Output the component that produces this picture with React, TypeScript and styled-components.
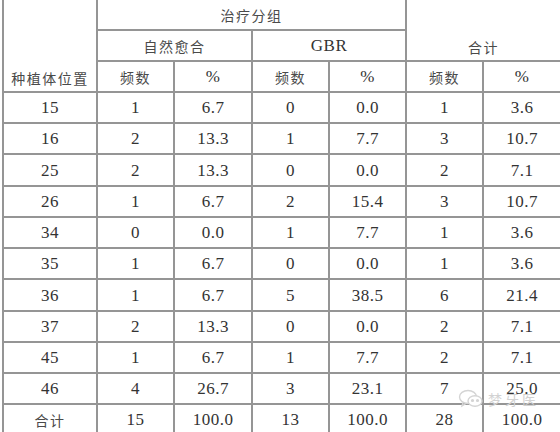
import React from 'react';
import styled, { createGlobalStyle } from 'styled-components';

const GlobalStyle = createGlobalStyle`
  html, body {
    margin: 0;
    padding: 0;
    background: #ffffff;
    overflow: hidden;
  }
  body {
    width: 560px;
    height: 432px;
  }
`;

const Page = styled.div`
  position: relative;
  width: 560px;
  height: 432px;
  overflow: hidden;
  padding-left: 2px;
  box-sizing: border-box;
`;

const Table = styled.table`
  border-collapse: collapse;
  table-layout: fixed;
  width: 557px;
  font-family: 'Liberation Serif', 'Noto Sans CJK SC', serif;
  color: #333333;
`;

const Col = styled.col<{ $w: number }>`
  width: ${(p) => p.$w}px;
`;

const Row = styled.tr<{ $h: number }>`
  height: ${(p) => p.$h}px;
`;

const Cell = styled.td<{ $bottom?: boolean; $first?: boolean; $last?: boolean; $cjk?: boolean }>`
  padding: 0;
  padding-bottom: ${(p) => (p.$bottom ? '6px' : '0')};
  text-align: center;
  vertical-align: ${(p) => (p.$bottom ? 'bottom' : 'middle')};
  border-right: ${(p) => (p.$last ? 'none' : '2px solid #959595')};
  border-bottom: 2px solid #959595;
  border-left: ${(p) => (p.$first ? '2px solid #959595' : 'none')};
  font-size: ${(p) => (p.$cjk ? '14px' : '17px')};
  letter-spacing: ${(p) => (p.$cjk ? '1.5px' : '0.5px')};
  font-family: ${(p) =>
    p.$cjk ? "'Noto Sans CJK SC', sans-serif" : "'Liberation Serif', 'Noto Sans CJK SC', serif"};
  color: ${(p) => (p.$cjk ? '#4a4a4a' : '#333333')};
  white-space: nowrap;
  line-height: 1;
`;

const Watermark = styled.div`
  position: absolute;
  left: 458px;
  top: 389px;
  display: flex;
  align-items: center;
  gap: 4px;
  color: #d2d2d2;
  font-family: 'Noto Sans CJK SC', sans-serif;
  font-size: 14px;
  letter-spacing: 3px;
  pointer-events: none;
`;

type DataRow = { pos: string; vals: string[]; h: number };

const rows: DataRow[] = [
  { pos: '15', vals: ['1', '6.7', '0', '0.0', '1', '3.6'], h: 31 },
  { pos: '16', vals: ['2', '13.3', '1', '7.7', '3', '10.7'], h: 31 },
  { pos: '25', vals: ['2', '13.3', '0', '0.0', '2', '7.1'], h: 32 },
  { pos: '26', vals: ['1', '6.7', '2', '15.4', '3', '10.7'], h: 31 },
  { pos: '34', vals: ['0', '0.0', '1', '7.7', '1', '3.6'], h: 31 },
  { pos: '35', vals: ['1', '6.7', '0', '0.0', '1', '3.6'], h: 31 },
  { pos: '36', vals: ['1', '6.7', '5', '38.5', '6', '21.4'], h: 32 },
  { pos: '37', vals: ['2', '13.3', '0', '0.0', '2', '7.1'], h: 31 },
  { pos: '45', vals: ['1', '6.7', '1', '7.7', '2', '7.1'], h: 31 },
  { pos: '46', vals: ['4', '26.7', '3', '23.1', '7', '25.0'], h: 31 },
];

const widths = [94, 77, 78, 77, 77, 77, 77];

const WeChatIcon = () => (
  <svg width="26" height="20" viewBox="0 0 26 20" fill="none" stroke="#d4d4d4" strokeWidth="1.4">
    <ellipse cx="10" cy="8" rx="8.5" ry="6.5" />
    <path d="M5 13.5 L4 17 L8 14.5" />
    <ellipse cx="17" cy="12" rx="7" ry="5.3" fill="#ffffff" />
    <circle cx="14.5" cy="11.5" r="0.9" fill="#d4d4d4" />
    <circle cx="19.5" cy="11.5" r="0.9" fill="#d4d4d4" />
  </svg>
);

const App: React.FC = () => {
  return (
    <Page>
      <GlobalStyle />
      <Table>
        <colgroup>
          {widths.map((w, i) => (
            <Col key={i} $w={w} />
          ))}
        </colgroup>
        <tbody>
          <Row $h={30}>
            <Cell rowSpan={3} $first $bottom $cjk>
              种植体位置
            </Cell>
            <Cell colSpan={4} $cjk>
              治疗分组
            </Cell>
            <Cell colSpan={2} rowSpan={2} $last $bottom $cjk>
              合计
            </Cell>
          </Row>
          <Row $h={31}>
            <Cell colSpan={2} $cjk>
              自然愈合
            </Cell>
            <Cell colSpan={2}>GBR</Cell>
          </Row>
          <Row $h={31}>
            <Cell $cjk>频数</Cell>
            <Cell>%</Cell>
            <Cell $cjk>频数</Cell>
            <Cell>%</Cell>
            <Cell $cjk>频数</Cell>
            <Cell $last>%</Cell>
          </Row>
          {rows.map((r) => (
            <Row key={r.pos} $h={r.h}>
              <Cell $first>{r.pos}</Cell>
              {r.vals.map((v, i) => (
                <Cell key={i} $last={i === r.vals.length - 1}>
                  {v}
                </Cell>
              ))}
            </Row>
          ))}
          <Row $h={31}>
            <Cell $first $cjk>
              合计
            </Cell>
            <Cell>15</Cell>
            <Cell>100.0</Cell>
            <Cell>13</Cell>
            <Cell>100.0</Cell>
            <Cell>28</Cell>
            <Cell $last>100.0</Cell>
          </Row>
        </tbody>
      </Table>
      <Watermark>
        <WeChatIcon />
        <span>梦牙医</span>
      </Watermark>
    </Page>
  );
};

export default App;
